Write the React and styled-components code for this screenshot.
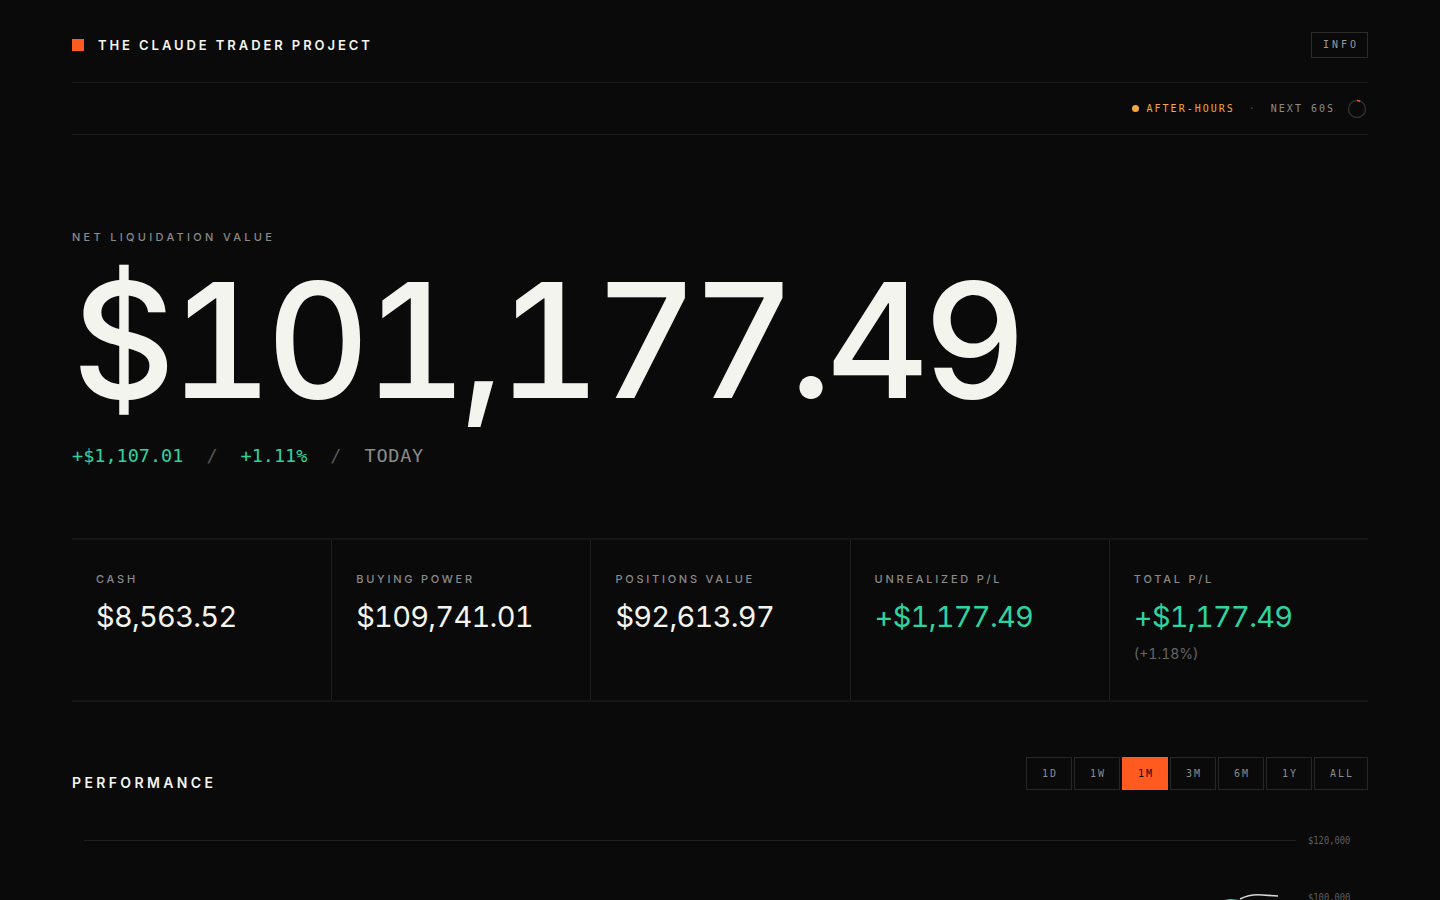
import styled, { createGlobalStyle } from "styled-components";

const GlobalStyle = createGlobalStyle`
  html, body {
    margin: 0;
    padding: 0;
    background: #0a0a0a;
    color: #f4f4ef;
    font-family: "Inter", "Liberation Sans", sans-serif;
    overflow: hidden;
  }
`;

const mono = `"DejaVu Sans Mono", "Liberation Mono", monospace`;

const ranges = ["1D", "1W", "1M", "3M", "6M", "1Y", "ALL"];

const stats = [
  { label: "CASH", value: "$8,563.52" },
  { label: "BUYING POWER", value: "$109,741.01" },
  { label: "POSITIONS VALUE", value: "$92,613.97" },
  { label: "UNREALIZED P/L", value: "+$1,177.49", up: true },
  { label: "TOTAL P/L", value: "+$1,177.49", up: true, sub: "(+1.18%)" },
];

const App = () => {
  return (
    <>
      <GlobalStyle />
      <Page>
        <Header>
          <Brand>
            <BrandMark />
            <BrandName>THE CLAUDE TRADER PROJECT</BrandName>
          </Brand>
          <InfoButton>INFO</InfoButton>
        </Header>

        <StatusBar>
          <Session>
            <Dot />
            AFTER-HOURS
          </Session>
          <Sep>·</Sep>
          <Next>NEXT 60S</Next>
          <Timer viewBox="0 0 20 20">
            <circle cx="10" cy="10" r="8.5" fill="none" stroke="#2e2e2e" strokeWidth="1.5" />
            <path d="M10 1.5 A8.5 8.5 0 0 1 13.2 2.1" fill="none" stroke="#ff5a1f" strokeWidth="1.5" />
          </Timer>
        </StatusBar>

        <Hero>
          <Eyebrow>NET LIQUIDATION VALUE</Eyebrow>
          <BigValue>$101,177.49</BigValue>
          <ChangeLine>
            <Up>+$1,107.01</Up>
            <Slash>/</Slash>
            <Up>+1.11%</Up>
            <Slash>/</Slash>
            <Muted>TODAY</Muted>
          </ChangeLine>
        </Hero>

        <StatsGrid>
          {stats.map((s) => (
            <StatCell key={s.label}>
              <StatLabel>{s.label}</StatLabel>
              <StatValue $up={s.up}>{s.value}</StatValue>
              {s.sub && <StatSub>{s.sub}</StatSub>}
            </StatCell>
          ))}
        </StatsGrid>

        <PerfHeader>
          <SectionTitle>PERFORMANCE</SectionTitle>
          <RangeGroup>
            {ranges.map((r) => (
              <RangeButton key={r} $active={r === "1M"} $wide={r === "ALL"}>
                {r}
              </RangeButton>
            ))}
          </RangeGroup>
        </PerfHeader>

        <Chart>
          <GridRow>
            <GridLine />
            <AxisLabel>$120,000</AxisLabel>
          </GridRow>
          <GridRow>
            <GridLine $hidden />
            <AxisLabel>$100,000</AxisLabel>
            <Curve viewBox="0 0 60 10">
              <path d="M22 6 Q32 1 44 2 L60 3" fill="none" stroke="#d8d8d8" strokeWidth="1.5" />
              <path d="M0 9 L12 7 L22 8" fill="none" stroke="#2dd4a0" strokeWidth="2" />
            </Curve>
          </GridRow>
        </Chart>
      </Page>
    </>
  );
};

const Page = styled.div`
  padding: 0 72px;
  height: 900px;
  box-sizing: border-box;
`;

const Header = styled.header`
  height: 83px;
  display: flex;
  align-items: center;
  justify-content: space-between;
  border-bottom: 1px solid #1c1c1c;
  padding-top: 7px;
  box-sizing: border-box;
`;

const Brand = styled.div`
  display: flex;
  align-items: center;
  gap: 14px;
`;

const BrandMark = styled.span`
  width: 12px;
  height: 12px;
  background: #ff5a1f;
`;

const BrandName = styled.span`
  font-size: 13px;
  font-weight: 600;
  letter-spacing: 0.225em;
  color: #f4f4ef;
`;

const InfoButton = styled.button`
  height: 26px;
  width: 57px;
  border: 1px solid #2c2c2c;
  background: transparent;
  color: #9a9a9a;
  font-family: ${mono};
  font-size: 10px;
  letter-spacing: 0.3em;
  padding: 0 0 0 3px;
`;

const StatusBar = styled.div`
  height: 51px;
  display: flex;
  align-items: center;
  justify-content: flex-end;
  gap: 14px;
  border-bottom: 1px solid #1c1c1c;
  font-family: ${mono};
  font-size: 10px;
  letter-spacing: 0.2em;
  padding-right: 1px;
`;

const Session = styled.span`
  display: flex;
  align-items: center;
  gap: 8px;
  color: #f2a93e;
`;

const Dot = styled.span`
  width: 7px;
  height: 7px;
  border-radius: 50%;
  background: #f2a93e;
`;

const Sep = styled.span`
  color: #555;
`;

const Next = styled.span`
  color: #8a8a8a;
`;

const Timer = styled.svg`
  width: 20px;
  height: 20px;
  margin-left: -2px;
`;

const Hero = styled.section`
  padding-top: 95px;
`;

const Eyebrow = styled.div`
  font-size: 11px;
  letter-spacing: 0.3em;
  color: #8a8a8a;
  font-weight: 500;
`;

const BigValue = styled.div`
  font-size: 160px;
  font-weight: 500;
  font-variant-numeric: tabular-nums;
  letter-spacing: -0.04em;
  line-height: 1.1;
  color: #f4f4ef;
  margin: 8px 0 0 0;
`;

const ChangeLine = styled.div`
  display: flex;
  align-items: center;
  gap: 23px;
  font-family: ${mono};
  font-size: 18.5px;
  margin-top: 17px;
`;

const Up = styled.span`
  color: #2dd4a0;
`;

const Slash = styled.span`
  color: #555;
`;

const Muted = styled.span`
  color: #8a8a8a;
  letter-spacing: 0.04em;
`;

const StatsGrid = styled.section`
  margin-top: 72px;
  display: grid;
  grid-template-columns: repeat(5, 1fr);
  border-top: 2px solid #161616;
  border-bottom: 2px solid #161616;
`;

const StatCell = styled.div`
  height: 160px;
  padding: 32px 24px 0;
  box-sizing: border-box;
  border-left: 1px solid #1e1e1e;

  &:first-child {
    border-left: none;
  }
`;

const StatLabel = styled.div`
  font-size: 11px;
  letter-spacing: 0.25em;
  color: #8a8a8a;
  font-weight: 500;
`;

const StatValue = styled.div`
  font-size: 29px;
  font-variant-numeric: tabular-nums;
  letter-spacing: -0.025em;
  margin-top: 13px;
  color: ${(props) => (props.$up ? "#2dd4a0" : "#f4f4ef")};
`;

const StatSub = styled.div`
  font-size: 14px;
  font-variant-numeric: tabular-nums;
  color: #666;
  margin-top: 11px;
`;

const PerfHeader = styled.div`
  display: flex;
  justify-content: space-between;
  align-items: flex-start;
  margin-top: 55px;
`;

const SectionTitle = styled.h2`
  margin: 17px 0 0;
  font-size: 14px;
  font-weight: 600;
  letter-spacing: 0.24em;
  color: #f4f4ef;
`;

const RangeGroup = styled.div`
  display: flex;
  gap: 2px;
`;

const RangeButton = styled.button`
  height: 33px;
  width: ${(props) => (props.$wide ? "54px" : "46px")};
  border: 1px solid ${(props) => (props.$active ? "#ff5a1f" : "#262626")};
  background: ${(props) => (props.$active ? "#ff5a1f" : "transparent")};
  color: ${(props) => (props.$active ? "#1a0a04" : "#8a8a8a")};
  font-family: ${mono};
  font-size: 10px;
  letter-spacing: 0.2em;
  padding: 0 0 0 2px;
`;

const Chart = styled.div`
  margin-top: 43px;
  padding-left: 12px;
  display: flex;
  flex-direction: column;
  gap: 44px;
`;

const GridRow = styled.div`
  position: relative;
  display: flex;
  align-items: center;
  gap: 12px;
`;

const GridLine = styled.div`
  flex: 1;
  border-top: 1px solid ${(props) => (props.$hidden ? "transparent" : "#1f1f1f")};
`;

const AxisLabel = styled.span`
  font-family: ${mono};
  font-size: 11px;
  color: #5e5e5e;
  width: 60px;
  transform: scaleX(0.8);
  transform-origin: left center;
`;

const Curve = styled.svg`
  position: absolute;
  right: 90px;
  top: 2px;
  width: 60px;
  height: 10px;
`;

export default App;
